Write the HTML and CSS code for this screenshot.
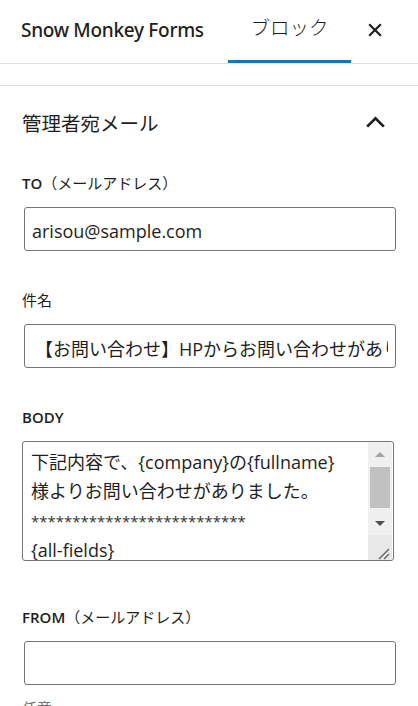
FILE: index.html
```html
<!DOCTYPE html>
<html lang="ja">
<head>
  <meta charset="UTF-8" />
  <meta name="viewport" content="width=device-width, initial-scale=1.0"/>
  <title>Snow Monkey Forms - ブロック設定</title>
  <link rel="stylesheet" href="styles.css">
</head>
<body>

  <!-- サイドバーのヘッダー -->
  <div class="sidebar-header">
    <div class="sidebar-title">Snow Monkey Forms</div>
    <div class="sidebar-tab">ブロック</div>
    <button class="icon-btn close-btn" aria-label="閉じる">
      <svg width="24" height="24" viewBox="0 0 24 24"><path d="M5 5l14 14M19 5L5 19" /></svg>
    </button>
  </div>

  <div class="panel-gap"></div>

  <div class="panel">
    <div class="panel-title">
      <span>管理者宛メール</span>
      <button class="icon-btn" aria-label="閉じる">
        <svg width="24" height="24" viewBox="0 0 24 24"><path d="M4 16l8-8 8 8" /></svg>
      </button>
    </div>

    <div class="field">
      <label class="field-label"><span class="en">TO</span>（メールアドレス）</label>
      <input class="text-input" type="text" value="arisou@sample.com">
    </div>

    <div class="field">
      <label class="field-label">件名</label>
      <input class="text-input subject" type="text" value="【お問い合わせ】HPからお問い合わせがありました">
    </div>

    <div class="field field-body">
      <label class="field-label"><span class="en">BODY</span></label>
      <div class="fake-textarea">
        <div class="fake-textarea-text">
          下記内容で、{company}の{fullname}<br>
          様よりお問い合わせがありました。<br>
          <span class="stars">**************************</span><br>
          {all-fields}
        </div>
        <div class="scrollbar">
          <div class="sb-btn"><span class="arrow-up"></span></div>
          <div class="sb-track"><div class="sb-thumb"></div></div>
          <div class="sb-btn"><span class="arrow-down"></span></div>
          <div class="sb-corner">
            <svg width="24" height="25" viewBox="0 0 24 25"><path d="M21 14l-10 10M21 19l-5 5" /></svg>
          </div>
        </div>
      </div>
    </div>

    <div class="field">
      <label class="field-label"><span class="en">FROM</span>（メールアドレス）</label>
      <input class="text-input" type="text" value="">
      <p class="help">任意</p>
    </div>
  </div>

</body>
</html>
```

FILE: styles.css
```css
body {
  margin: 0;
  font-family: "Open Sans", "Noto Sans CJK JP", sans-serif;
  color: #1e1e1e;
  background: #fff;
  overflow: hidden;
}
.sidebar-header {
  display: flex;
  align-items: stretch;
  height: 63px;
  border-bottom: 1px solid #e0e0e0;
}
.sidebar-title {
  display: flex;
  align-items: center;
  padding: 0 0 3px 21px;
  width: 207px;
  font-family: "Noto Sans", "Open Sans", sans-serif;
  font-size: 19px;
  font-weight: 500;
  letter-spacing: -0.3px;
}
.sidebar-tab {
  display: flex;
  align-items: center;
  justify-content: center;
  width: 123px;
  padding-bottom: 10px;
  box-sizing: border-box;
  font-size: 19.5px;
  font-weight: 300;
  box-shadow: inset 0 -3px 0 #007cba;
}
.icon-btn {
  display: flex;
  align-items: center;
  justify-content: center;
  width: 36px;
  height: 36px;
  padding: 0;
  border: 0;
  background: none;
  color: #1e1e1e;
}
.icon-btn svg path {
  fill: none;
  stroke: currentColor;
  stroke-width: 2.6;
}
.close-btn {
  align-self: center;
  margin: 0 0 4px 6px;
}
.close-btn svg {
  width: 20px;
  height: 20px;
}
.panel-gap {
  height: 21px;
  border-bottom: 1px solid #e0e0e0;
}
.panel {
  padding: 0 22px 0 22px;
}
.panel-title {
  display: flex;
  align-items: center;
  justify-content: space-between;
  height: 72px;
  padding-bottom: 4px;
  margin-bottom: 10px;
  font-size: 19.5px;
}
.panel-title .icon-btn {
  margin-right: 3px;
}
.panel-title svg {
  width: 25px;
  height: 25px;
}
.field {
  margin-bottom: 38px;
}
.field-body {
  margin-bottom: 45px;
}
.field-label {
  display: block;
  line-height: 22px;
  font-size: 15px;
  margin-bottom: 13px;
}
.field-label .en {
  font-weight: 600;
}
.text-input {
  display: block;
  width: 372px;
  height: 44px;
  margin-left: 2px;
  box-sizing: border-box;
  padding: 3px 7px 0;
  border: 1px solid #757575;
  border-radius: 3px;
  font-family: "Open Sans", "Noto Sans CJK JP", sans-serif;
  font-size: 18px;
  color: #1e1e1e;
  outline: none;
}
.subject {
  padding-left: 10px;
}
.fake-textarea {
  display: flex;
  width: 372px;
  height: 120px;
  box-sizing: border-box;
  border: 1px solid #757575;
  border-radius: 3px;
  overflow: hidden;
}
.fake-textarea-text {
  flex: 1;
  padding: 6px 0 0 8px;
  font-size: 18px;
  line-height: 29px;
  white-space: nowrap;
  overflow: hidden;
}
.stars {
  font-size: 15px;
  color: #333;
}
.scrollbar {
  display: flex;
  flex-direction: column;
  width: 24px;
  background: #f0f0f0;
  margin-right: 1px;
}
.sb-btn {
  display: flex;
  align-items: center;
  justify-content: center;
  height: 24px;
}
.sb-btn:first-child {
  height: 25px;
}
.arrow-up {
  border-left: 5.5px solid transparent;
  border-right: 5.5px solid transparent;
  border-bottom: 5px solid #a3a3a3;
}
.arrow-down {
  border-left: 5.5px solid transparent;
  border-right: 5.5px solid transparent;
  border-top: 5px solid #505050;
}
.sb-track {
  height: 44px;
}
.sb-thumb {
  height: 41px;
  margin: 0 2px;
  background: #c1c1c1;
}
.sb-corner {
  height: 25px;
  background: #e8e8e8;
}
.sb-corner svg path {
  fill: none;
  stroke: #6a6a6a;
  stroke-width: 1.5;
}
.help {
  margin: 12px 0 0;
  font-size: 15px;
  color: #757575;
}
```
